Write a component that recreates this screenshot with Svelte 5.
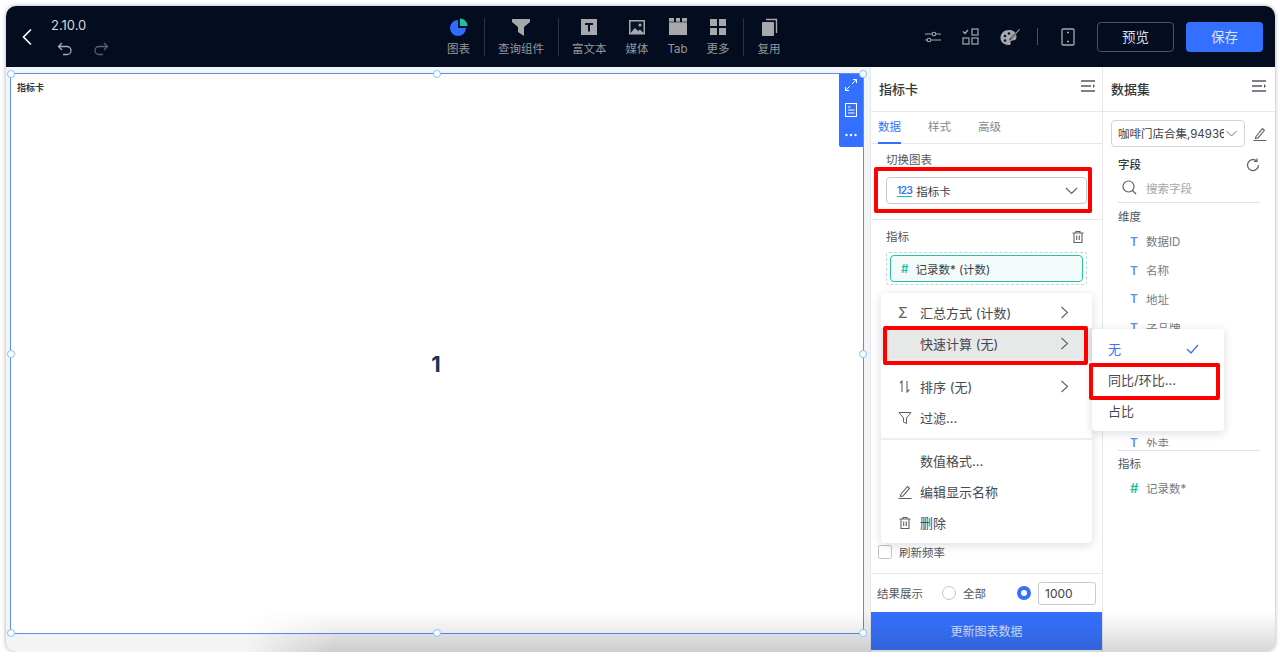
<script>
  const tools = [
    { label: '图表', icon: 'pie', sep: true },
    { label: '查询组件', icon: 'filter', sep: true },
    { label: '富文本', icon: 'text' },
    { label: '媒体', icon: 'media' },
    { label: 'Tab', icon: 'tab' },
    { label: '更多', icon: 'grid', sep: true },
    { label: '复用', icon: 'copy' }
  ]
  // rows 5-7 sit behind the submenu and can't be read in the screenshot
  const fields = ['数据ID', '名称', '地址', '子品牌', '', '', '', '外卖']
</script>

{#snippet trash(size)}
  <svg width={size} height={size} viewBox="0 0 14 14" fill="none" stroke="#5d6066" stroke-width="1.1">
    <path d="M1.5 3h11M5 3V1.5h4V3M3 3v9.5h8V3M5.7 5.5v4.5M8.3 5.5v4.5" />
  </svg>
{/snippet}

{#snippet collapse()}
  <svg width="16" height="14" viewBox="0 0 16 14" fill="none" stroke="#555a62" stroke-width="1.4">
    <path d="M1 2h14M1 7h10M1 12h14" />
    <path d="M13 5l2 2-2 2z" fill="#555a62" stroke="none" />
  </svg>
{/snippet}

{#snippet chevron()}
  <svg class="chev" width="9" height="13" viewBox="0 0 9 13" fill="none" stroke="#5d6066" stroke-width="1.1">
    <path d="M1.5 1l6 5.5-6 5.5" />
  </svg>
{/snippet}

<div class="window">
  <header class="topbar">
    <div class="left">
      <svg width="12" height="18" viewBox="0 0 12 18" fill="none" stroke="#fff" stroke-width="1.6">
        <path d="M10 1.5L2.5 9l7.5 7.5" />
      </svg>
      <div class="version">
        <span>2.10.0</span>
        <div class="undo">
          <svg width="16" height="14" viewBox="0 0 16 14" fill="none" stroke="#a9adb3" stroke-width="1.3">
            <path d="M5 1L1.5 4.5 5 8M1.5 4.5H10a4 4 0 0 1 0 8H6" />
          </svg>
          <svg width="16" height="14" viewBox="0 0 16 14" fill="none" stroke="#5c6068" stroke-width="1.3">
            <path d="M11 1l3.500 3.500L11 8M14.500 4.500H6a4 4 0 0 0 0 8h4" />
          </svg>
        </div>
      </div>
    </div>

    <nav class="tools">
      {#each tools as t, i}
        <div class="tool">
          <svg width="20" height="20" viewBox="0 0 20 20">
            {#if t.icon === 'pie'}
              <path d="M9 3a8 8 0 1 0 8 8H9z" fill="#2f6bff" />
              <path d="M11 1.500a7.500 7.500 0 0 1 7.500 7.500H11z" fill="#12c7a8" />
            {:else if t.icon === 'filter'}
              <path d="M1 2h18v3l-6 5v9l-6-4v-5L1 5z" fill="#a6a8ab" />
            {:else if t.icon === 'text'}
              <rect x="2" y="2" width="16" height="16" fill="#a6a8ab" />
              <path d="M6 6h8v2h-3v6.500H9V8H6z" fill="#0b1426" />
            {:else if t.icon === 'media'}
              <rect x="2" y="3" width="16" height="14.500" fill="#a6a8ab" />
              <rect x="3.500" y="4.500" width="13" height="11.500" fill="#0b1426" />
              <path d="M3.500 16l4.500-5 3 3 2-1.500 3.500 3.500z" fill="#a6a8ab" />
              <circle cx="13" cy="8" r="1.500" fill="#a6a8ab" />
            {:else if t.icon === 'tab'}
              <path d="M1 1h5v4h2V1h4v4h2V1h5v17H1z" fill="#a6a8ab" />
              <path d="M1 5h18" stroke="#0b1426" stroke-width="0.6" />
            {:else if t.icon === 'grid'}
              <path d="M2 2h7v7H2zM11 2h7v7h-7zM2 11h7v7H2zM11 11h7v7h-7z" fill="#a6a8ab" />
            {:else}
              <rect x="3" y="5" width="12" height="14" rx="1" fill="#a6a8ab" />
              <path d="M7 2.500h10.500V16" fill="none" stroke="#a6a8ab" stroke-width="1.4" />
            {/if}
          </svg>
          <span>{t.label}</span>
        </div>
        {#if t.sep}<i class="sep"></i>{:else if i < tools.length - 1}<i class="space"></i>{/if}
      {/each}
    </nav>

    <div class="right">
      <svg width="16" height="14" viewBox="0 0 16 14" fill="none" stroke="#a6a8ab" stroke-width="1.1">
        <path d="M0 4h7M11 4h5M0 10h2M6 10h10" />
        <circle cx="9" cy="4" r="1.800" />
        <circle cx="4" cy="10" r="1.800" />
      </svg>
      <svg width="17" height="17" viewBox="0 0 17 17" fill="none" stroke="#a6a8ab" stroke-width="1.2">
        <path d="M1 3.500l2 2 3-3.500" />
        <rect x="10" y="1" width="6" height="6" />
        <rect x="1" y="10" width="6" height="6" />
        <rect x="10" y="10" width="6" height="6" />
      </svg>
      <svg width="20" height="18" viewBox="0 0 20 18">
        <path d="M9 2C4 2 .5 5.500.5 10c0 4 3.500 7 8 7 2.500 0 2.500-1.500 2-2.500-.5-1.200.5-2 2-2 2.500 0 4-1 4-3.500C16.500 4.500 13.500 2 9 2z" fill="#a6a8ab" />
        <circle cx="5" cy="8" r="1.300" fill="#0b1426" />
        <circle cx="5" cy="12.500" r="1.300" fill="#0b1426" />
        <circle cx="9" cy="5.500" r="1.300" fill="#0b1426" />
        <path d="M19.500.5L11 9.500l-1.500 2.500 2.500-1.500L20 2z" fill="#a6a8ab" stroke="#0b1426" stroke-width="0.6" />
      </svg>
      <i class="sep tall"></i>
      <svg width="14" height="18" viewBox="0 0 14 18" fill="none" stroke="#a6a8ab" stroke-width="1.3">
        <rect x="1" y="1" width="12" height="16" rx="1" />
        <path d="M6 4.500h2M6 13.500h2" />
      </svg>
      <button class="btn ghost">预览</button>
      <button class="btn primary">保存</button>
    </div>
  </header>

  <div class="body">
    <main class="canvas">
      <section class="card">
        <div class="card-title">指标卡</div>
        <div class="value">1</div>
        <i class="handle" style="left:-4px;top:-4px"></i>
        <i class="handle" style="left:calc(50% - 4px);top:-4px"></i>
        <i class="handle" style="right:-4px;top:-4px"></i>
        <i class="handle" style="left:-4px;top:calc(50% - 4px)"></i>
        <i class="handle" style="right:-4px;top:calc(50% - 4px)"></i>
        <i class="handle" style="left:-4px;bottom:-4px"></i>
        <i class="handle" style="left:calc(50% - 4px);bottom:-4px"></i>
        <i class="handle" style="right:-4px;bottom:-4px"></i>
        <div class="card-tools">
          <svg width="12" height="12" viewBox="0 0 12 12" fill="none" stroke="#fff" stroke-width="1">
            <path d="M7 5l4.500-4.500M8 .5h3.500V4M5 7L.5 11.500M4 11.500H.5V8" />
          </svg>
          <svg width="12" height="14" viewBox="0 0 12 14" fill="none" stroke="#fff" stroke-width="1.1">
            <rect x=".5" y=".5" width="11" height="13" />
            <path d="M3 4h2.500M3 7h6.500M3 10h6.500" />
          </svg>
          <svg width="12" height="4" viewBox="0 0 12 4" fill="#fff">
            <circle cx="1.500" cy="2" r="1.200" /><circle cx="6" cy="2" r="1.200" /><circle cx="10.500" cy="2" r="1.200" />
          </svg>
        </div>
      </section>
    </main>

    <aside class="props">
      <div class="panel-head"><h2>指标卡</h2>{@render collapse()}</div>
      <div class="tabs">
        <span class="active">数据</span><span>样式</span><span>高级</span>
      </div>
      <div class="switch">
        <label for="chart-type">切换图表</label>
        <div class="select" id="chart-type">
          <span class="n123">123</span><span>指标卡</span>
          <svg class="caret" width="13" height="8" viewBox="0 0 13 8" fill="none" stroke="#5d6066" stroke-width="1.1">
            <path d="M1 1l5.500 5.500L12 1" />
          </svg>
        </div>
      </div>
      <div class="metric">
        <div class="metric-head"><span>指标</span>{@render trash(14)}</div>
        <div class="drop">
          <div class="pill"><b>#</b><span>记录数* (计数)</span></div>
        </div>
      </div>
      <div class="grow"></div>
      <div class="refresh"><i class="check"></i><span>刷新频率</span></div>
      <div class="result">
        <span class="result-label">结果展示</span>
        <i class="radio"></i><span class="all">全部</span>
        <i class="radio on"></i>
        <div class="limit">1000</div>
      </div>
      <button class="update">更新图表数据</button>
    </aside>

    <aside class="dataset">
      <div class="panel-head"><h2>数据集</h2>{@render collapse()}</div>
      <div class="ds-row">
        <div class="ds-select">
          <span>咖啡门店合集,94936</span>
          <svg width="11" height="7" viewBox="0 0 11 7" fill="none" stroke="#6d7076" stroke-width="1">
            <path d="M.5 1l5 5 5-5" />
          </svg>
        </div>
        <svg width="14" height="14" viewBox="0 0 14 14" fill="none" stroke="#5d6066" stroke-width="1.100">
          <path d="M3 9.500L9.500 1.500l2 1.700L5 11l-2.500.5zM.5 13.500h13" />
        </svg>
      </div>
      <div class="ds-body">
        <div class="ds-head">
          <strong>字段</strong>
          <svg width="14" height="14" viewBox="0 0 14 14" fill="none" stroke="#5d6066" stroke-width="1.200">
            <path d="M12.500 7A5.500 5.500 0 1 1 10.500 2.800" />
            <path d="M11 .5v3H8" />
          </svg>
        </div>
        <div class="search">
          <svg width="15" height="15" viewBox="0 0 15 15" fill="none" stroke="#5d6066" stroke-width="1.200">
            <circle cx="6.500" cy="6.500" r="5.500" /><path d="M10.500 10.500L14 14" />
          </svg>
          <span>搜索字段</span>
        </div>
        <div class="group">维度</div>
        <div class="fields-wrap">
          <ul class="fields">
            {#each fields as f}
              <li>{#if f}<b class="t">T</b><span>{f}</span>{/if}</li>
            {/each}
          </ul>
        </div>
        <div class="group">指标</div>
        <div class="field-row"><b class="hash">#</b><span>记录数*</span></div>
      </div>
    </aside>

    <i class="shade"></i>

    <div class="menu">
      <div class="item"><span class="ico">Σ</span><span>汇总方式 (计数)</span>{@render chevron()}</div>
      <div class="item hot"><span class="ico"></span><span>快速计算 (无)</span>{@render chevron()}</div>
      <hr />
      <div class="item">
        <span class="ico">
          <svg width="14" height="13" viewBox="0 0 14 13" fill="none" stroke="#5d6066" stroke-width="1.100">
            <path d="M2 3l2-2v11M9 1v11l2.500-2.500" />
          </svg>
        </span>
        <span>排序 (无)</span>{@render chevron()}
      </div>
      <div class="item">
        <span class="ico">
          <svg width="14" height="14" viewBox="0 0 14 14" fill="none" stroke="#5d6066" stroke-width="1">
            <path d="M1 1.500h12L8.500 7v5.500L5.500 11V7z" />
          </svg>
        </span>
        <span>过滤...</span>
      </div>
      <hr />
      <div class="item"><span class="ico"></span><span>数值格式...</span></div>
      <div class="item">
        <span class="ico">
          <svg width="14" height="14" viewBox="0 0 14 14" fill="none" stroke="#5d6066" stroke-width="1.100">
            <path d="M3 9L9.500 1.500l2 1.700L5 11l-2.500.5zM.5 13.500h13" />
          </svg>
        </span>
        <span>编辑显示名称</span>
      </div>
      <div class="item"><span class="ico">{@render trash(14)}</span><span>删除</span></div>
    </div>

    <div class="submenu">
      <div class="sub-item on"><span>无</span>
        <svg width="13" height="10" viewBox="0 0 13 10" fill="none" stroke="#3b72f6" stroke-width="1.300">
          <path d="M1 5l4 4 7-8" />
        </svg>
      </div>
      <div class="sub-item">同比/环比...</div>
      <div class="sub-item">占比</div>
    </div>

    <i class="mark m1"></i>
    <i class="mark m2"></i>
    <i class="mark m3"></i>
  </div>
</div>

<style>
  :global(body) { margin: 0; background: #fff; }
  * { box-sizing: border-box; }
  .window {
    margin: 6px 5px 0 6px; height: 646px; display: flex; flex-direction: column; overflow: hidden;
    border-radius: 10px; background: #f3f4f6; box-shadow: 0 0 4px rgba(0, 0, 0, .35);
    font-family: Inter, "Noto Sans CJK SC", sans-serif; color: #3c3f45;
  }
  .topbar { flex: 0 0 61px; display: flex; align-items: center; background: #040d20; position: relative; }
  .left { display: flex; align-items: center; width: 441px; padding-left: 15px; gap: 18px; flex: none; }
  .version { display: flex; flex-direction: column; gap: 9px; color: #d4d6d9; font-size: 13px; line-height: 16px; }
  .undo { display: flex; gap: 20px; padding-left: 6px; }
  .tools { display: flex; align-items: center; }
  .tool { display: flex; flex-direction: column; align-items: center; gap: 5px; color: #94979c; font-size: 11.500px; line-height: 14px; white-space: nowrap; }
  .space { width: 19px; }
  .sep { width: 1px; height: 38px; margin: 0 13.500px; background: #2b3342; }
  .sep.tall { height: 17px; background: #4a505c; margin: 0 2px 0 -4px; }
  .right { margin-left: auto; display: flex; align-items: center; gap: 21px; padding-right: 12px; }
  .btn { width: 77px; height: 30px; border-radius: 4px; font: inherit; font-size: 13.500px; padding: 0 0 2px; }
  .ghost { background: transparent; border: 1px solid #4b5160; color: #dcdee1; margin-left: 1px; margin-right: -9px; }
  .primary { background: #3370ff; border: 0; color: #d9e4ff; }

  .body { flex: 1; display: flex; min-height: 0; position: relative; }
  .canvas { width: 864px; flex: none; padding: 6px 6px 18px 4px; }
  .card { position: relative; height: 100%; background: #fff; border: 1px solid #5b8cf5; }
  .card-title { padding: 8px 6px; font-size: 9px; line-height: 12px; font-weight: 700; color: #33363b; }
  .value { position: absolute; left: 0; right: 2px; top: 50%; margin-top: -2px; text-align: center; font-size: 22px; line-height: 24px; font-weight: 700; color: #17355c; }
  .handle { position: absolute; width: 8px; height: 8px; border-radius: 50%; background: #fff; border: 1.500px solid #7cc4ff; z-index: 1; }
  .card-tools { position: absolute; top: 0; right: 0; width: 24px; height: 73px; background: #3370ff; border-radius: 0 0 0 2px; display: flex; flex-direction: column; align-items: center; gap: 12px; padding-top: 5px; }
  .card-tools svg:last-child { margin-top: 4px; }
  .shade {
    position: absolute; left: 240px; right: 0; bottom: 0; height: 42px; pointer-events: none;
    background: linear-gradient(to top, rgba(0, 0, 0, .16), rgba(0, 0, 0, .08) 45%, transparent);
    mask-image: linear-gradient(to right, transparent, #000 90px);
  }

  .props { width: 232px; flex: none; display: flex; flex-direction: column; background: #fff; border-left: 1px solid #e6e7ea; }
  .dataset { flex: 1; background: #fff; border-left: 1px solid #e6e7ea; min-width: 0; }
  .panel-head { height: 45px; display: flex; align-items: center; justify-content: space-between; padding: 0 6px 0 8px; border-bottom: 1px solid #e6e7ea; }
  .dataset .panel-head { padding-right: 8px; }
  .panel-head svg { margin-top: -6px; }
  h2 { margin: -2px 0 0; font-size: 13px; font-weight: 500; color: #33363b; }
  .tabs { height: 32px; display: flex; gap: 27px; padding: 0 7px; font-size: 11.500px; border-bottom: 1px solid #e6e7ea; color: #85888e; }
  .tabs span { line-height: 31px; height: 32px; }
  .tabs .active { color: #3370ff; border-bottom: 2px solid #3370ff; }
  .switch { height: 76px; padding: 8px 15px 0; border-bottom: 1px solid #e6e7ea; }
  .switch label { display: block; font-size: 11.500px; line-height: 16px; color: #53565c; }
  .select { margin-top: 9px; height: 27px; display: flex; align-items: center; gap: 4px; padding: 0 10px; border: 1px solid #c8cacd; border-radius: 4px; font-size: 11.500px; color: #3c3f45; position: relative; }
  .n123 { font-size: 10px; font-weight: 600; color: #3370ff; border-bottom: 1px solid #12c7a8; line-height: 11px; letter-spacing: -.5px; }
  .caret { position: absolute; right: 8px; top: 9px; }
  .metric { padding: 9px 15px 0; }
  .metric-head { display: flex; justify-content: space-between; align-items: center; font-size: 11.500px; line-height: 16px; color: #53565c; padding-right: 2px; }
  .drop { margin-top: 7px; height: 33px; padding: 2px 3px; border: 1px dashed #b9d6d0; border-radius: 3px; }
  .pill { height: 27px; display: flex; align-items: center; gap: 7px; padding: 0 10px; border: 1px solid #2bbfa5; border-radius: 4px; background: #f2fbf9; font-size: 11.500px; color: #3c3f45; }
  .pill b, .hash { color: #1fbfa3; font-weight: 600; }
  .grow { flex: 1; }
  .refresh { height: 30px; display: flex; align-items: center; gap: 7px; padding: 0 7px 12px; font-size: 11.500px; color: #53565c; }
  .check { width: 14px; height: 14px; flex: none; border: 1px solid #c4c6ca; border-radius: 2px; }
  .result { height: 39px; display: flex; align-items: center; padding: 0 6px; border-top: 1px solid #e6e7ea; font-size: 11.500px; color: #53565c; white-space: nowrap; }
  .result-label { width: 65px; flex: none; }
  .radio { width: 14px; height: 14px; flex: none; border-radius: 50%; border: 1px solid #c4c6ca; }
  .radio.on { border: 4px solid #3370ff; margin-left: 31px; }
  .all { margin-left: 7px; width: 23px; flex: none; }
  .limit { margin-left: 7px; width: 58px; flex: none; height: 23px; border: 1px solid #c8cacd; border-radius: 3px; font-size: 12px; line-height: 21px; padding-left: 6px; color: #3c3f45; }
  .update { height: 38px; flex: none; margin-bottom: 2px; padding: 0 0 2px; border: 0; background: linear-gradient(#3370ff, #3d76ff); color: #d9e4ff; font: inherit; font-size: 12px; }

  .ds-row { display: flex; align-items: center; gap: 8px; padding: 8px 8px 0; }
  .ds-select { width: 135px; height: 27px; display: flex; align-items: center; justify-content: space-between; padding: 0 7px 1px 6px; border: 1px solid #d2d4d7; border-radius: 4px; font-size: 11.500px; color: #3c3f45; overflow: hidden; }
  .ds-select span { overflow: hidden; white-space: nowrap; width: 106px; flex: none; }
  .ds-select svg { flex: none; }
  .ds-body { padding: 10px 15px 0 15px; }
  .ds-head { display: flex; justify-content: space-between; align-items: center; font-size: 11.500px; line-height: 16px; color: #33363b; }
  .ds-head strong { font-weight: 500; }
  .search { height: 28px; display: flex; align-items: center; gap: 9px; padding: 0 0 2px 4px; margin-top: 2px; font-size: 11.500px; color: #a3a6ab; border-bottom: 1px solid #dfe1e4; }
  .group { font-size: 11.500px; line-height: 16px; color: #53565c; margin-top: 6px; }
  .fields-wrap { padding-bottom: 3px; border-bottom: 1px solid #dfe1e4; }
  .fields { list-style: none; margin: 0; padding: 2px 0 0; height: 222px; overflow: hidden; }
  .fields li, .field-row { height: 28.750px; display: flex; align-items: center; gap: 7px; padding-left: 12px; font-size: 11.500px; color: #777a80; }
  .t { width: 9px; color: #5c8df6; font-weight: 600; font-size: 12px; }
  .fields-wrap + .group { margin-top: 5px; }
  .field-row { margin-top: 2px; }
  .hash { width: 9px; font-size: 13px; }

  .menu, .submenu { position: absolute; background: #fff; border-radius: 4px; box-shadow: 0 2px 10px rgba(20, 30, 50, .16); font-size: 13px; color: #47494f; }
  .menu { left: 875px; top: 226px; width: 211px; height: 250px; padding: 4px 0; z-index: 2; }
  .item { height: 31px; display: flex; align-items: center; padding: 0 23px 0 17px; }
  .item .chev { margin-left: auto; }
  .item.hot { background: #e7e8e8; }
  .ico { width: 22px; flex: none; display: flex; align-items: center; font-size: 14px; color: #5d6066; }
  hr { border: 0; border-top: 2px solid #edeef0; margin: 5px 0; }
  hr:first-of-type { margin: 0 0 10px; }
  .submenu { left: 1086px; top: 262px; width: 132px; height: 102px; padding: 4px 0; z-index: 2; }
  .sub-item { height: 31px; display: flex; align-items: center; justify-content: space-between; padding: 0 25px 0 16px; }
  .sub-item.on { color: #3b72f6; }
  .mark { position: absolute; border: 4px solid #f00; border-radius: 2px; z-index: 3; }
  .m1 { left: 868px; top: 100px; width: 218px; height: 46px; }
  .m2 { left: 877px; top: 259px; width: 205px; height: 39px; }
  .m3 { left: 1083px; top: 296px; width: 131px; height: 37px; }
</style>
